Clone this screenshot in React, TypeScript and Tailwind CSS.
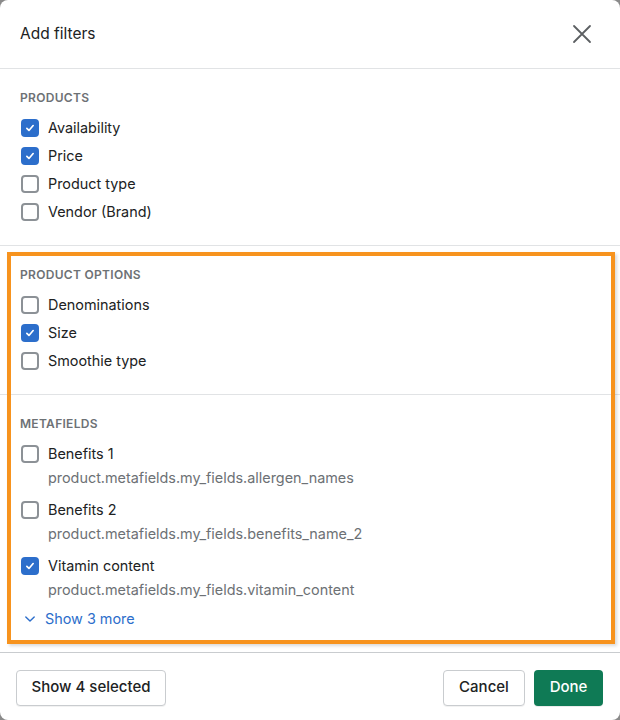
import React, { useState } from 'react';

interface FilterOption {
  id: string;
  label: string;
  path?: string;
}

interface FilterSection {
  title: string;
  options: FilterOption[];
}

const sections: FilterSection[] = [
  {
    title: 'Products',
    options: [
      { id: 'availability', label: 'Availability' },
      { id: 'price', label: 'Price' },
      { id: 'product_type', label: 'Product type' },
      { id: 'vendor', label: 'Vendor (Brand)' },
    ],
  },
  {
    title: 'Product options',
    options: [
      { id: 'denominations', label: 'Denominations' },
      { id: 'size', label: 'Size' },
      { id: 'smoothie', label: 'Smoothie type' },
    ],
  },
];

const metafields: FilterOption[] = [
  { id: 'benefits_1', label: 'Benefits 1', path: 'product.metafields.my_fields.allergen_names' },
  { id: 'benefits_2', label: 'Benefits 2', path: 'product.metafields.my_fields.benefits_name_2' },
  { id: 'vitamin', label: 'Vitamin content', path: 'product.metafields.my_fields.vitamin_content' },
];

const Checkbox: React.FC<{ checked: boolean; onChange: () => void }> = ({ checked, onChange }) => (
  <button
    type="button"
    onClick={onChange}
    className={`flex h-[18px] w-[18px] shrink-0 items-center justify-center rounded-[4px] ${
      checked ? 'bg-[#2c6ecb]' : 'border-2 border-[#8c9196] bg-white'
    }`}
  >
    {checked && (
      <svg viewBox="0 0 20 20" className="h-[14px] w-[14px]" fill="none" stroke="white" strokeWidth={2.4} strokeLinecap="round" strokeLinejoin="round">
        <path d="M5.5 10.5l3 3 6-7" />
      </svg>
    )}
  </button>
);

const App: React.FC = () => {
  const [selected, setSelected] = useState<string[]>(['availability', 'price', 'size', 'vitamin']);

  const toggle = (id: string) =>
    setSelected((prev) => (prev.includes(id) ? prev.filter((s) => s !== id) : [...prev, id]));

  return (
    <div className="min-h-[720px] w-[620px] bg-[#8a8a8a]" style={{ fontFamily: 'Inter, "Liberation Sans", sans-serif' }}>
      <div className="relative flex h-[720px] flex-col overflow-hidden rounded-[8px] bg-white text-[#202223]">
        {/* Header */}
        <div className="flex h-[69px] shrink-0 items-center justify-between border-b border-[#e1e3e5] pl-5 pr-[28px]">
          <h2 className="text-[15.5px] leading-6">Add filters</h2>
          <button type="button" className="text-[#5c5f62]">
            <svg viewBox="0 0 20 20" className="h-[20px] w-[20px]" fill="none" stroke="currentColor" strokeWidth={1.8} strokeLinecap="round">
              <path d="M2 2l16 16M18 2L2 18" />
            </svg>
          </button>
        </div>

        {/* Body */}
        <div className="flex-1">
          {sections.map((section) => (
            <div key={section.title} className="border-b border-[#e1e3e5] px-5 pb-[19px] pt-[21px]">
              <div className="mb-2 text-[12px] font-semibold uppercase leading-4 tracking-[0.3px] text-[#6d7175]">
                {section.title}
              </div>
              {section.options.map((opt) => (
                <label key={opt.id} className="flex h-[28px] items-center gap-[9px] pl-px">
                  <Checkbox checked={selected.includes(opt.id)} onChange={() => toggle(opt.id)} />
                  <span className="text-[14.4px] leading-5">{opt.label}</span>
                </label>
              ))}
            </div>
          ))}

          <div className="px-5 pt-[21px]">
            <div className="mb-2 text-[12px] font-semibold uppercase leading-4 tracking-[0.3px] text-[#6d7175]">
              Metafields
            </div>
            <div className="flex flex-col gap-2">
              {metafields.map((opt) => (
                <div key={opt.id}>
                  <label className="flex h-[28px] items-center gap-[9px] pl-px">
                    <Checkbox checked={selected.includes(opt.id)} onChange={() => toggle(opt.id)} />
                    <span className="text-[14.4px] leading-5">{opt.label}</span>
                  </label>
                  <div className="pl-[28px] text-[14.4px] leading-5 text-[#6d7175]">{opt.path}</div>
                </div>
              ))}
            </div>
            <button type="button" className="mt-[9px] flex items-center gap-[8px] pl-[3px] text-[14.4px] leading-5 text-[#2c6ecb]">
              <svg viewBox="0 0 20 20" className="h-[14px] w-[14px]" fill="none" stroke="currentColor" strokeWidth={2} strokeLinecap="round" strokeLinejoin="round">
                <path d="M4 7l6 6 6-6" />
              </svg>
              Show 3 more
            </button>
          </div>
        </div>

        {/* Footer */}
        <div className="flex h-[68px] shrink-0 items-center justify-between border-t border-[#c9cccf] px-4 pt-[2px]">
          <button type="button" className="h-[36px] w-[150px] rounded-[4px] border border-[#c9cccf] bg-white text-[15px] font-medium shadow-[0_1px_0_rgba(0,0,0,0.05)]">
            Show 4 selected
          </button>
          <div className="flex gap-[9px] pr-[1px]">
            <button type="button" className="h-[36px] w-[82px] rounded-[4px] border border-[#c9cccf] bg-white text-[15px] font-medium shadow-[0_1px_0_rgba(0,0,0,0.05)]">
              Cancel
            </button>
            <button type="button" className="h-[36px] w-[69px] rounded-[4px] bg-[#0f7a55] text-[15px] font-medium text-white shadow-[0_1px_0_rgba(0,0,0,0.08)]">
              Done
            </button>
          </div>
        </div>

        {/* Highlight annotation */}
        <div className="pointer-events-none absolute left-[7px] top-[252px] h-[392px] w-[608px] border-4 border-[#f7931e] shadow-[2px_2px_3px_rgba(0,0,0,0.15)]" />
      </div>
    </div>
  );
};

export default App;
